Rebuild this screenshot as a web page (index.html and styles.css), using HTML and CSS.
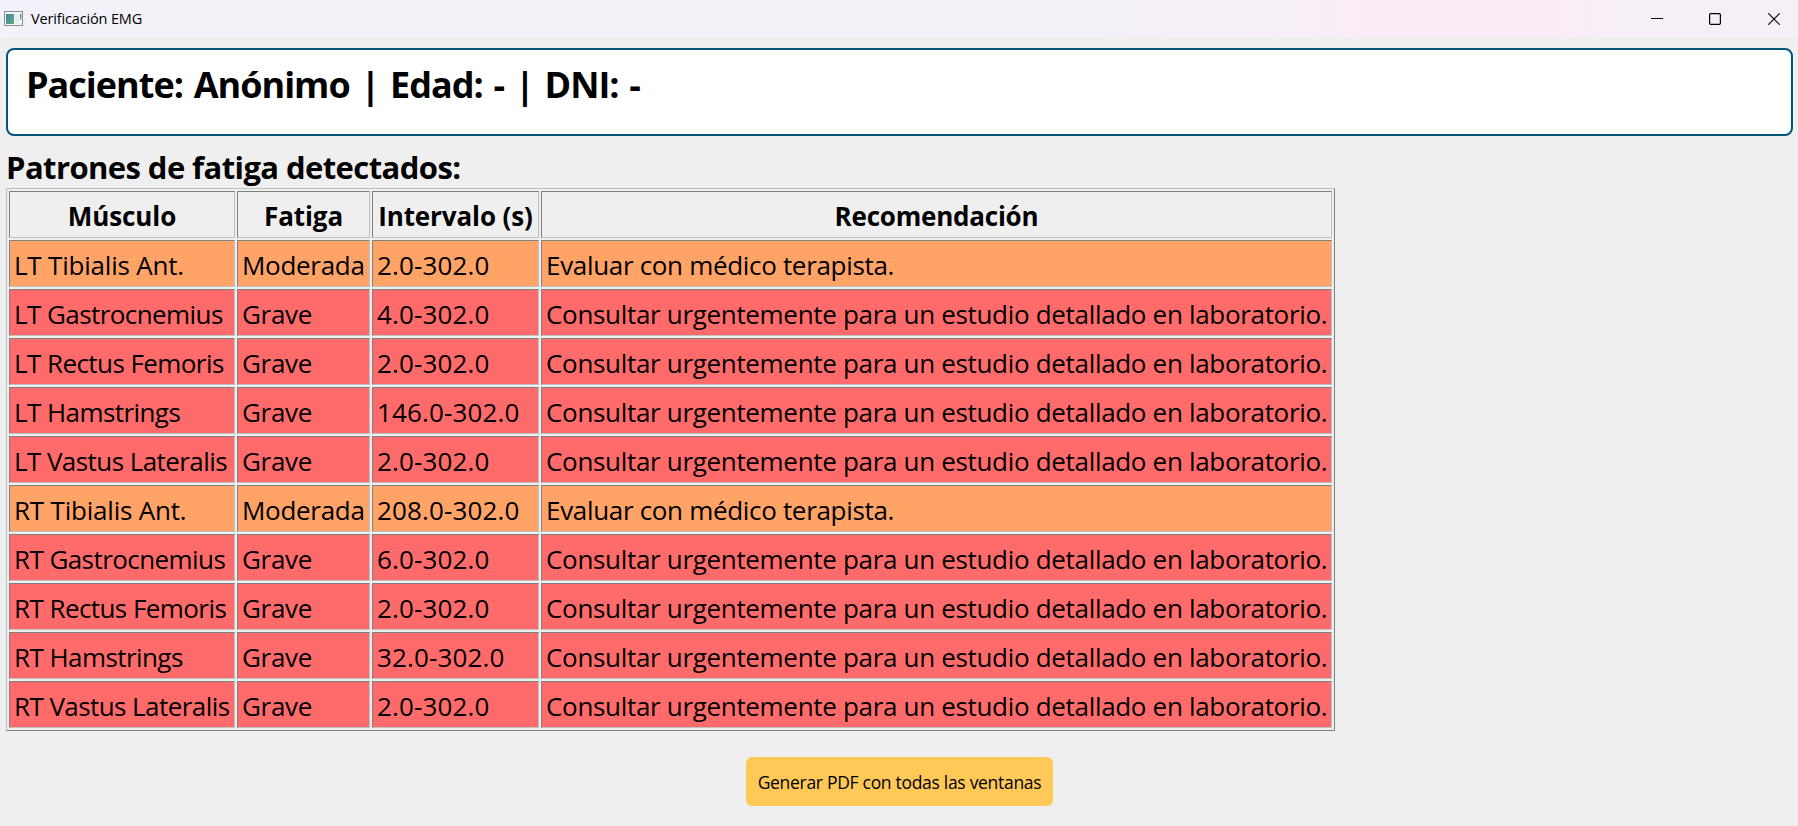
FILE: index.html
```html
<!DOCTYPE html>
<html lang="es">
<head>
<meta charset="utf-8">
<title>Verificación EMG</title>
<link rel="stylesheet" href="styles.css">
</head>
<body>
<header class="titlebar">
  <svg class="app-icon" width="19" height="15" viewBox="0 0 19 15">
    <defs><linearGradient id="g" x1="0" y1="0" x2="1" y2="1"><stop offset="0" stop-color="#4a7fa5"/><stop offset="1" stop-color="#5fae7c"/></linearGradient></defs>
    <rect x=".5" y=".5" width="18" height="14" fill="#f4f5f6" stroke="#8c8f92"/>
    <rect x="2" y="3" width="8" height="10" fill="url(#g)"/>
    <rect x="11" y="3" width="4" height="10" fill="#e9ecec"/>
    <rect x="16" y="3" width="1.3" height="3" fill="#3f7fb5"/>
    <rect x="16" y="6" width="1.3" height="3" fill="#6fb58c"/>
  </svg>
  <span class="window-title">Verificación EMG</span>
  <div class="controls">
    <svg class="minimize" width="12" height="12" viewBox="0 0 12 12"><path d="M0 5.5H12" stroke="#000" fill="none"/></svg>
    <svg class="maximize" width="12" height="12" viewBox="0 0 12 12"><rect x=".6" y=".6" width="10.8" height="10.8" rx="1.2" stroke="#000" stroke-width="1.2" fill="none"/></svg>
    <svg width="12" height="12" viewBox="0 0 12 12"><path d="M.3.3 11.7 11.7M11.7.3.3 11.7" stroke="#000" stroke-width="1.1" fill="none"/></svg>
  </div>
</header>
<main class="content">
  <section class="patient"><h1>Paciente: Anónimo | Edad: - | DNI: -</h1></section>
  <h2>Patrones de fatiga detectados:</h2>
  <table class="patterns">
    <colgroup><col class="c-muscle"><col class="c-fatigue"><col class="c-interval"><col class="c-advice"></colgroup>
    <tr><th>Músculo</th><th>Fatiga</th><th>Intervalo (s)</th><th>Recomendación</th></tr>
    <tr class="moderate"><td>LT Tibialis Ant.</td><td>Moderada</td><td>2.0-302.0</td><td>Evaluar con médico terapista.</td></tr>
    <tr class="severe"><td>LT Gastrocnemius</td><td>Grave</td><td>4.0-302.0</td><td>Consultar urgentemente para un estudio detallado en laboratorio.</td></tr>
    <tr class="severe"><td>LT Rectus Femoris</td><td>Grave</td><td>2.0-302.0</td><td>Consultar urgentemente para un estudio detallado en laboratorio.</td></tr>
    <tr class="severe"><td>LT Hamstrings</td><td>Grave</td><td>146.0-302.0</td><td>Consultar urgentemente para un estudio detallado en laboratorio.</td></tr>
    <tr class="severe"><td>LT Vastus Lateralis</td><td>Grave</td><td>2.0-302.0</td><td>Consultar urgentemente para un estudio detallado en laboratorio.</td></tr>
    <tr class="moderate"><td>RT Tibialis Ant.</td><td>Moderada</td><td>208.0-302.0</td><td>Evaluar con médico terapista.</td></tr>
    <tr class="severe"><td>RT Gastrocnemius</td><td>Grave</td><td>6.0-302.0</td><td>Consultar urgentemente para un estudio detallado en laboratorio.</td></tr>
    <tr class="severe"><td>RT Rectus Femoris</td><td>Grave</td><td>2.0-302.0</td><td>Consultar urgentemente para un estudio detallado en laboratorio.</td></tr>
    <tr class="severe"><td>RT Hamstrings</td><td>Grave</td><td>32.0-302.0</td><td>Consultar urgentemente para un estudio detallado en laboratorio.</td></tr>
    <tr class="severe"><td>RT Vastus Lateralis</td><td>Grave</td><td>2.0-302.0</td><td>Consultar urgentemente para un estudio detallado en laboratorio.</td></tr>
  </table>
  <button class="pdf">Generar PDF con todas las ventanas</button>
</main>
</body>
</html>
```
FILE: styles.css
```css
* { box-sizing: border-box; }
body { margin: 0; height: 826px; overflow: hidden; background: #efefef; color: #000; font-family: "Open Sans", "Noto Sans", sans-serif; }
.titlebar { display: flex; align-items: center; height: 37px; padding: 0 18px 0 4px; background: linear-gradient(90deg, #f3f1f9 0, #f3f0f8 58%, #f6eff7 70%, #faecf6 77%, #faecf6 86%, #f6eff7 91%, #f5eff7 100%); }
.app-icon { display: block; }
.window-title { margin-left: 8px; font-size: 14.5px; letter-spacing: -0.15px; }
.controls { display: flex; margin-left: auto; }
.controls svg { display: block; }
.minimize { margin-right: 46px; }
.maximize { margin-right: 47px; }
.content { display: flex; flex-direction: column; align-items: flex-start; padding: 11px 5px 0 6px; }
.patient { width: 1787px; height: 88px; padding: 10px 18px; border: 2px solid #00567a; border-radius: 8px; background: #fff; }
h1, h2 { margin: 0; white-space: nowrap; font-weight: 700; }
h1 { font-size: 36px; line-height: 50px; letter-spacing: -1px; word-spacing: 2.4px; }
h2 { height: 42px; margin-top: 10px; font-size: 31px; line-height: 42px; letter-spacing: -0.58px; }
.patterns { width: 1329px; table-layout: fixed; border: 1px solid; border-color: #c0c0c0 #808080 #808080 #c0c0c0; border-spacing: 2px; font-size: 26px; line-height: 36px; }
.c-muscle { width: 226px; }
.c-fatigue { width: 133px; }
.c-interval { width: 167px; }
.c-advice { width: 791px; }
th, td { height: 47px; padding: 6px 4px 3px; border: 1px solid; border-color: #808080 #c0c0c0 #c0c0c0 #808080; white-space: nowrap; }
th { letter-spacing: -0.1px; }
th:last-child { letter-spacing: -0.22px; }
td:nth-child(1) { letter-spacing: -0.57px; }
td:nth-child(2) { letter-spacing: -0.3px; }
td:nth-child(3) { letter-spacing: 0.15px; }
td:nth-child(4) { letter-spacing: -0.32px; }
.moderate td { background: #ffa366; }
.moderate td:first-child { letter-spacing: -0.2px; }
.severe td { background: #ff6b6b; }
.pdf { align-self: center; width: 307px; height: 49px; margin-top: 26px; padding: 1px 0 0; border: 0; border-radius: 6px; background: #ffc857; color: #000; font-family: inherit; font-size: 17.5px; letter-spacing: -0.3px; white-space: nowrap; }
```
